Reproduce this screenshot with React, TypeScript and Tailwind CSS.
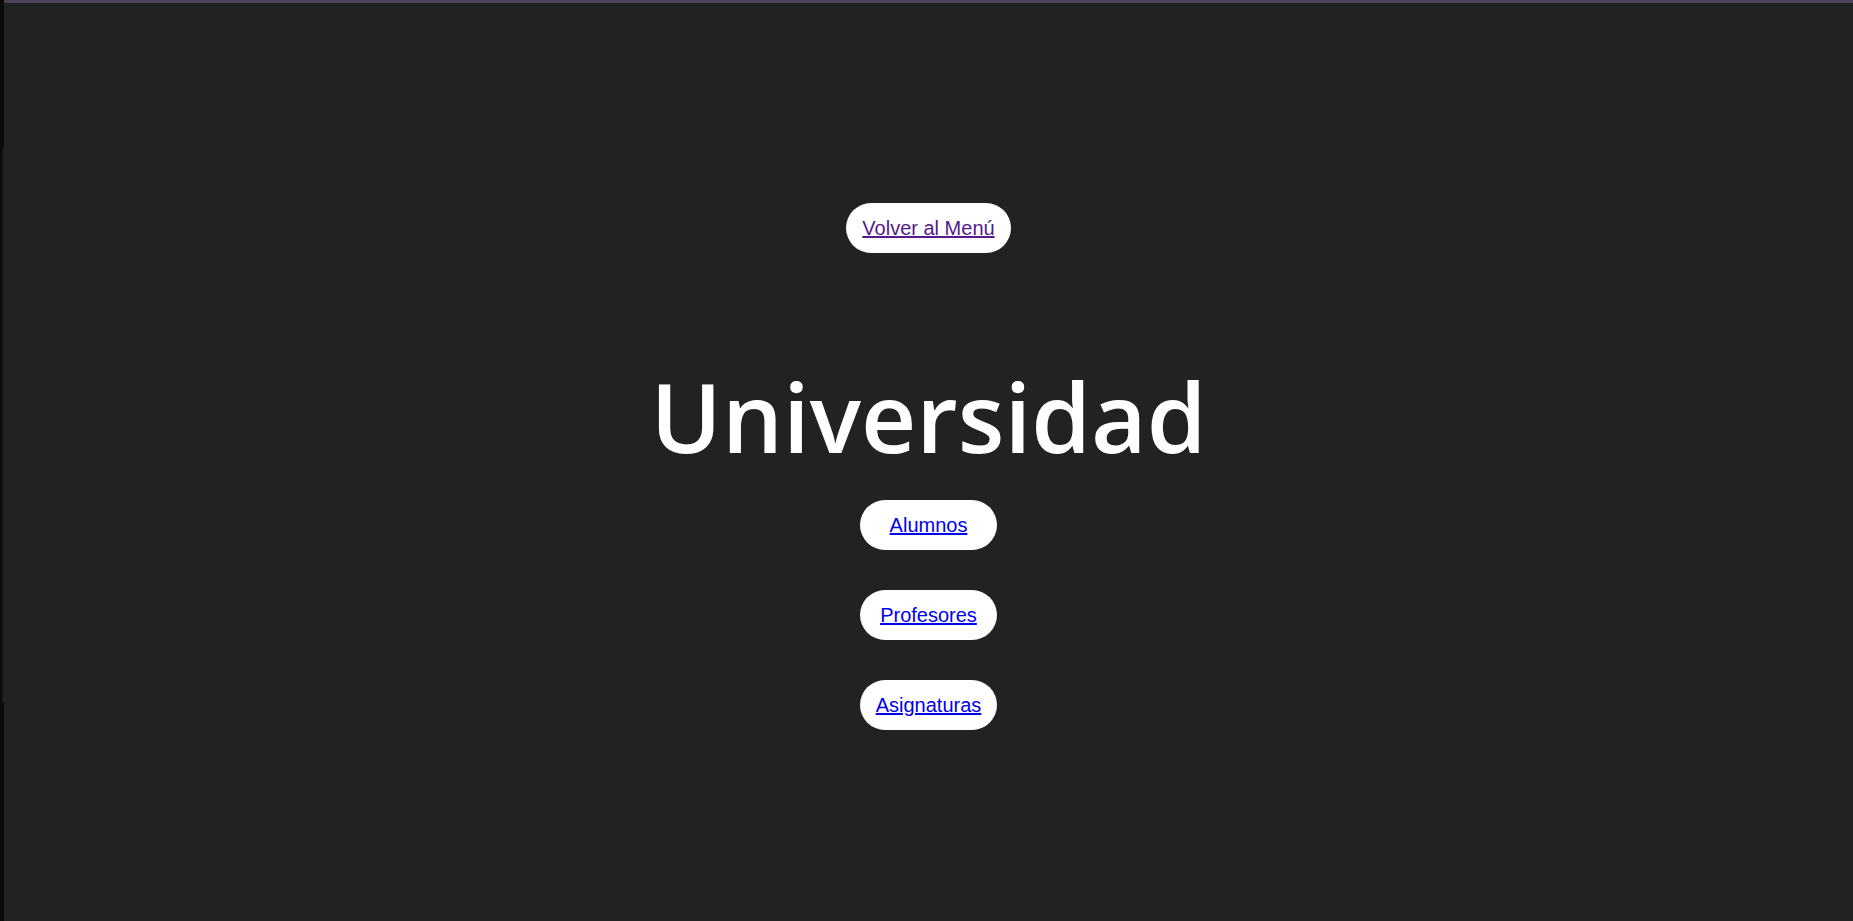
import React from "react";

export default function App() {
  const btn =
    "h-[50px] flex items-center justify-center rounded-full bg-white text-[20px] leading-[23px] underline";
  return (
    <div
      className="min-h-screen w-full flex bg-[#222222]"
      style={{ fontFamily: '"Liberation Sans", Arial, sans-serif' }}
    >
      <div className="w-[4px] shrink-0 flex flex-col bg-[#0b0b0b]">
        <div className="h-[148px]" />
        <div className="h-[555px] w-[2px] ml-[2px] bg-[#1a1a1a]" />
      </div>
      <div className="flex-1 flex flex-col">
        <div className="h-[3px] bg-[#4a4259]" />
        <main className="flex flex-col items-center pt-[200px]">
          <a href="#" className={`${btn} px-4 text-[#551a8b]`}>
            Volver al Menú
          </a>
          <h1
            className="mt-[115px] text-white text-[96px] leading-[96px] font-semibold"
            style={{ fontFamily: '"Open Sans", "Noto Sans", sans-serif' }}
          >
            Universidad
          </h1>
          <nav className="mt-[36px] flex flex-col items-center gap-[40px]">
            <a href="#" className={`${btn} w-[137px] text-[#0000ee]`}>
              Alumnos
            </a>
            <a href="#" className={`${btn} w-[137px] text-[#0000ee]`}>
              Profesores
            </a>
            <a href="#" className={`${btn} w-[137px] text-[#0000ee]`}>
              Asignaturas
            </a>
          </nav>
        </main>
      </div>
    </div>
  );
}
